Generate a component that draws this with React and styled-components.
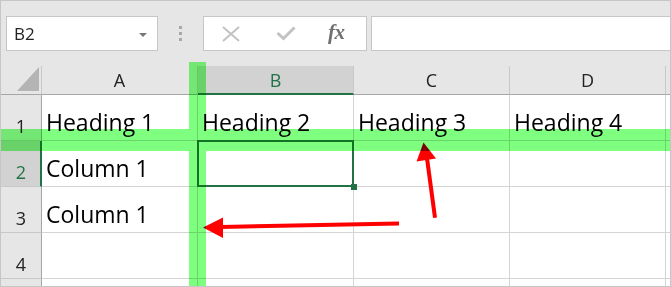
import React from 'react';
import styled, { createGlobalStyle } from 'styled-components';

const GlobalStyle = createGlobalStyle`
  html, body {
    margin: 0;
    padding: 0;
    background: #fff;
  }
  * {
    box-sizing: border-box;
  }
`;

const GREEN = '#217346';

export const Frame = styled.div`
  position: relative;
  width: 671px;
  height: 287px;
  overflow: hidden;
  border: 1px solid #c6c6c6;
  background: #e6e6e6;
  font-family: "Open Sans", "Liberation Sans", sans-serif;
  display: flex;
  flex-direction: column;
`;

export const Toolbar = styled.div`
  display: flex;
  align-items: stretch;
  height: 65px;
  padding: 15px 0 15px 5px;
  flex-shrink: 0;
`;

export const NameBox = styled.div`
  width: 152px;
  background: #fff;
  border: 1px solid #c6c6c6;
  display: flex;
  align-items: center;
  justify-content: space-between;
  padding: 0 10px 0 7px;
  font-size: 17px;
  color: #222;
`;

export const Caret = styled.span`
  width: 0;
  height: 0;
  border-left: 4px solid transparent;
  border-right: 4px solid transparent;
  border-top: 4px solid #777;
  margin-top: 2px;
`;

export const Grip = styled.div`
  width: 45px;
  display: flex;
  flex-direction: column;
  align-items: center;
  justify-content: center;
  gap: 3px;

  i {
    display: block;
    width: 3px;
    height: 3px;
    background: #a8a8a8;
  }
`;

export const FormulaButtons = styled.div`
  width: 164px;
  background: #fff;
  border: 1px solid #c6c6c6;
  display: flex;
  align-items: center;
  padding-left: 18px;
  gap: 36px;
`;

export const Fx = styled.span`
  font-family: "Liberation Serif", "DejaVu Serif", serif;
  font-style: italic;
  font-weight: bold;
  font-size: 21px;
  color: #707070;
  letter-spacing: -0.5px;
  margin-left: -4px;
  margin-top: -2px;
`;

export const FormulaInput = styled.div`
  flex: 1;
  margin-left: 4px;
  background: #fff;
  border: 1px solid #c6c6c6;
  border-right: none;
`;

export const Sheet = styled.div`
  display: grid;
  grid-template-columns: 41px repeat(4, 156px) 1fr;
  grid-template-rows: 29px repeat(5, 46px);
  background: #fff;
`;

export const Corner = styled.div`
  background: #e6e6e6;
  border-right: 1px solid #c8c8c8;
  border-bottom: 1px solid #a6a6a6;
  display: flex;
  align-items: flex-end;
  justify-content: flex-end;
  padding: 0 2px 3px 0;
`;

export const ColHead = styled.div`
  background: ${p => (p.$active ? '#d2d2d2' : '#e6e6e6')};
  color: ${p => (p.$active ? GREEN : '#222')};
  border-right: 1px solid #c8c8c8;
  border-bottom: ${p => (p.$active ? `2px solid ${GREEN}` : '1px solid #a6a6a6')};
  font-size: 18px;
  line-height: 1;
  display: flex;
  align-items: flex-end;
  justify-content: center;
  padding-bottom: ${p => (p.$active ? '4px' : '5px')};
`;

export const RowHead = styled.div`
  background: ${p => (p.$active ? '#d2d2d2' : '#e6e6e6')};
  color: ${p => (p.$active ? GREEN : '#222')};
  border-right: ${p => (p.$active ? `2px solid ${GREEN}` : '1px solid #a6a6a6')};
  border-bottom: 1px solid #c8c8c8;
  font-size: 18px;
  line-height: 1;
  display: flex;
  align-items: flex-end;
  justify-content: center;
  padding-bottom: 5px;
  padding-left: ${p => (p.$active ? '1px' : '0')};
`;

export const Cell = styled.div`
  position: relative;
  border-right: 1px solid #d4d4d4;
  border-bottom: 1px solid #d4d4d4;
  font-size: 23px;
  line-height: 1;
  color: #000;
  display: flex;
  align-items: flex-end;
  padding: 0 0 6px 4px;
  white-space: nowrap;
`;

export const Selection = styled.div`
  position: absolute;
  z-index: 1;
  top: -1px;
  left: -1px;
  right: -1px;
  bottom: -1px;
  border: 2px solid ${GREEN};

  &::after {
    content: '';
    position: absolute;
    right: -5px;
    bottom: -5px;
    width: 6px;
    height: 6px;
    background: ${GREEN};
  }
`;

export const Highlights = styled.div`
  position: absolute;
  inset: 0;
  z-index: 3;
  opacity: 0.5;
  mix-blend-mode: multiply;
  pointer-events: none;
`;

export const Band = styled.div`
  position: absolute;
  background: #00ff00;
`;

export const Arrows = styled.svg`
  position: absolute;
  z-index: 2;
  left: 0;
  top: 0;
  pointer-events: none;
`;

const columns = ['A', 'B', 'C', 'D', ''];

const rows = [
  ['Heading 1', 'Heading 2', 'Heading 3', 'Heading 4', ''],
  ['Column 1', '', '', '', ''],
  ['Column 1', '', '', '', ''],
  ['', '', '', '', ''],
  ['', '', '', '', ''],
];

const App = () => {
  return (
    <>
      <GlobalStyle />
      <Frame>
        <Toolbar>
          <NameBox>
            <span>B2</span>
            <Caret />
          </NameBox>
          <Grip>
            <i />
            <i />
            <i />
          </Grip>
          <FormulaButtons>
            <svg width="18" height="16" viewBox="0 0 18 16">
              <path d="M1 1 L17 15 M17 1 L1 15" stroke="#c2c2c2" strokeWidth="2" fill="none" />
            </svg>
            <svg width="20" height="15" viewBox="0 0 20 15">
              <path d="M1.5 7 L7.5 12.5 L18.5 1.5" stroke="#c2c2c2" strokeWidth="3" fill="none" />
            </svg>
            <Fx>fx</Fx>
          </FormulaButtons>
          <FormulaInput />
        </Toolbar>

        <Sheet>
          <Corner>
            <svg width="22" height="24" viewBox="0 0 22 24">
              <polygon points="0,24 22,24 22,0" fill="#b4b4b4" />
            </svg>
          </Corner>
          {columns.map((c, i) => (
            <ColHead key={i} $active={c === 'B'}>{c}</ColHead>
          ))}
          {rows.map((row, r) => (
            <React.Fragment key={r}>
              {/* the fifth row is only a sliver at the bottom edge, its number is out of view */}
              <RowHead $active={r === 1}>{r < 4 ? r + 1 : ''}</RowHead>
              {row.map((text, c) => (
                <Cell key={c}>
                  {text}
                  {r === 1 && c === 1 && <Selection />}
                </Cell>
              ))}
            </React.Fragment>
          ))}
        </Sheet>

        <Arrows width="671" height="287" viewBox="0 0 671 287">
          <g fill="#ff0000">
            <polygon points="432,217 436,216.5 428,157 424,157.5" />
            <polygon points="422.5,141.5 415.5,160.5 435,157.5" />
            <polygon points="398,220.5 398,224.5 220,228 220,224" />
            <polygon points="202,226.5 222,216.5 222,237" />
          </g>
        </Arrows>

        <Highlights>
          <Band style={{ left: 188, top: 61, width: 17, height: 226 }} />
          <Band style={{ left: -1, top: 128, width: 671, height: 22 }} />
        </Highlights>
      </Frame>
    </>
  );
};

export default App;
